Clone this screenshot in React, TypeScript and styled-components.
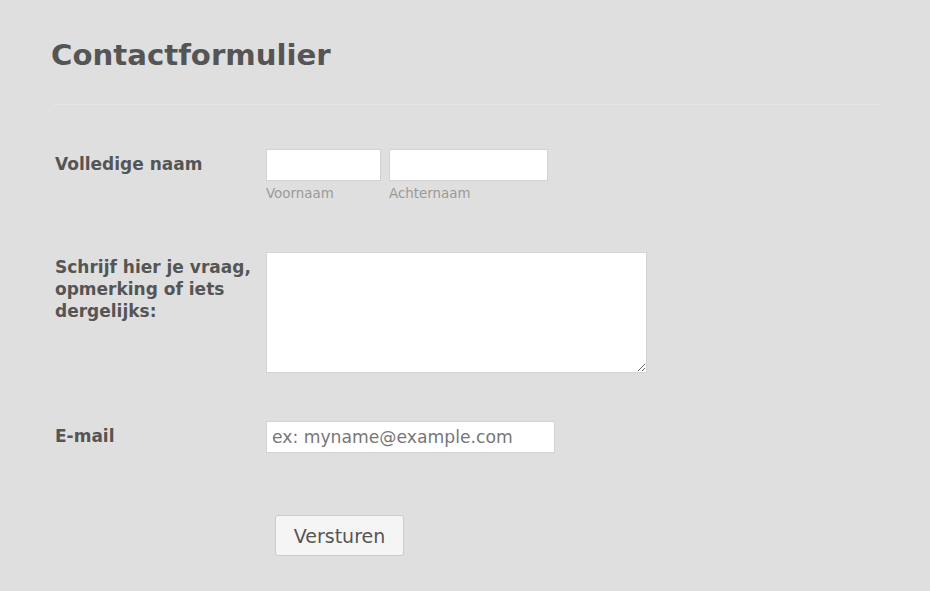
import React from "react";
import styled, { createGlobalStyle } from "styled-components";

const Global = createGlobalStyle`
  html, body { margin: 0; padding: 0; background: #e0dfe0; }
  body { font-family: "DejaVu Sans", Verdana, sans-serif; color: #555; }
  * { box-sizing: border-box; }
`;

const Page = styled.div`
  padding: 37px 50px 0 51px;
`;

const Title = styled.h1`
  margin: 0;
  font-size: 29.2px;
  font-weight: bold;
  line-height: 36px;
  color: #555;
`;

const Divider = styled.hr`
  margin: 31px 0 0 2px;
  border: 0;
  border-top: 1px solid #e6e5e6;
`;

const Form = styled.form`
  display: flex;
  flex-direction: column;
  padding: 44px 0 0 4px;
`;

const Row = styled.div<{ $mb: number }>`
  display: grid;
  grid-template-columns: 211px 1fr;
  margin-bottom: ${(p) => p.$mb}px;
`;

const Label = styled.label<{ $pt?: number }>`
  font-size: 17px;
  font-weight: bold;
  line-height: 22px;
  color: #555;
  padding-top: ${(p) => p.$pt ?? 0}px;
  padding-right: 8px;
`;

const NameFields = styled.div`
  display: flex;
  gap: 8px;
`;

const Sub = styled.div`
  display: flex;
  flex-direction: column;
`;

const Input = styled.input<{ $w: number }>`
  width: ${(p) => p.$w}px;
  height: 32px;
  border: 1px solid #d3d3d3;
  background: #fff;
  padding: 0 5px;
  font-family: "DejaVu Sans", sans-serif;
  font-size: 17.2px;
  color: #555;
  outline: none;
  &::placeholder { color: #777; }
`;

const SubLabel = styled.span`
  font-size: 13.4px;
  color: #999;
  margin-top: 5px;
  line-height: 16px;
`;

const TextArea = styled.textarea`
  width: 381px;
  height: 121px;
  border: 1px solid #d3d3d3;
  background: #fff;
  outline: none;
  display: block;
`;

const Button = styled.button`
  margin-left: 220px;
  width: 129px;
  height: 41px;
  border: 1px solid #ccc;
  border-radius: 3px;
  background: #f5f5f5;
  font-family: "DejaVu Sans", sans-serif;
  font-size: 19px;
  color: #555;
  padding: 0;
`;

export default function App() {
  return (
    <>
      <Global />
      <Page>
        <Title>Contactformulier</Title>
        <Divider />
        <Form>
          <Row $mb={50}>
            <Label $pt={4}>Volledige naam</Label>
            <NameFields>
              <Sub>
                <Input $w={115} />
                <SubLabel>Voornaam</SubLabel>
              </Sub>
              <Sub>
                <Input $w={159} />
                <SubLabel>Achternaam</SubLabel>
              </Sub>
            </NameFields>
          </Row>
          <Row $mb={48}>
            <Label $pt={4}>Schrijf hier je vraag, opmerking of iets dergelijks:</Label>
            <TextArea />
          </Row>
          <Row $mb={62}>
            <Label $pt={4}>E-mail</Label>
            <Input $w={289} placeholder="ex: myname@example.com" />
          </Row>
          <Button type="button">Versturen</Button>
        </Form>
      </Page>
    </>
  );
}
